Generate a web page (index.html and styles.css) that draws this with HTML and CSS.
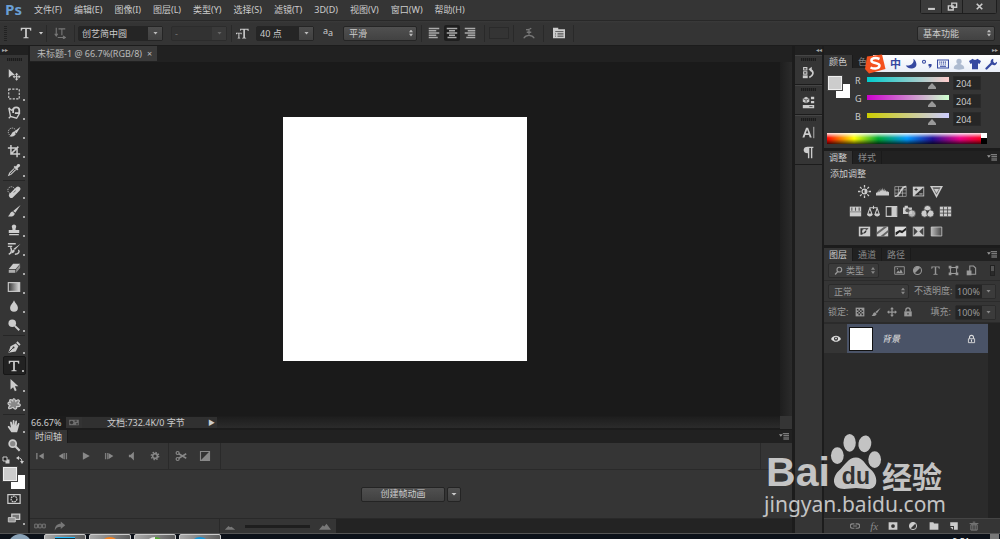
FILE: index.html
```
<!DOCTYPE html>
<html lang="zh-CN">
<head>
    <meta charset="UTF-8">
    <meta name="viewport" content="width=device-width, initial-scale=1.0">
    <title>未标题-1 @ 66.7%(RGB/8)</title>
    <link rel="stylesheet" href="styles.css">
</head>
<body>
    <!-- Icon sprite -->
    <svg class="sprite" aria-hidden="true">
        <defs>
            <linearGradient id="fade"><stop offset="0" stop-color="#333"/><stop offset="1" stop-color="#ddd"/></linearGradient>
            <linearGradient id="fade2"><stop offset="0" stop-color="#bbb"/><stop offset="1" stop-color="#444"/></linearGradient>
        </defs>
        <symbol id="move" viewBox="0 0 16 16"><path d="M2 1v10l3-2.500 4-.5z"/><path d="M11 5.500l2 2.200h-1.300v1.600h1.600V8l2.200 2-2.200 2v-1.300h-1.600v1.600H13l-2 2.200-2-2.200h1.300v-1.600H8.700V12l-2.200-2 2.200-2v1.300h1.600V7.700H9z"/></symbol>
        <symbol id="marquee" viewBox="0 0 16 16"><rect x="2" y="2.500" width="12" height="11" fill="none" stroke="currentColor" stroke-width="1.300" stroke-dasharray="2.500 1.500"/></symbol>
        <symbol id="lasso" viewBox="0 0 16 16"><path d="M2 2l3 3M2 2l2 10 7 2 3-5M4 12l-2 2M5 5l3-2" fill="none" stroke="currentColor" stroke-width="1.500"/><path d="M7 8V4.500a3.500 3 0 0 1 7 0V8H9" fill="none" stroke="currentColor" stroke-width="2"/></symbol>
        <symbol id="quicksel" viewBox="0 0 16 16"><circle cx="6" cy="8" r="4.500" fill="none" stroke="currentColor" stroke-dasharray="1.500 1"/><path d="M15.500 2L11 9.500 8.500 7.500zM9.500 8.500c.5 3-1.500 5-7 4.500 2.500-1 2.500-5 6-6z"/></symbol>
        <symbol id="crop" viewBox="0 0 16 16"><path d="M4.500 1v10.500H15M1 4.500h10.500V15M5 11l8-8" fill="none" stroke="currentColor" stroke-width="1.700"/></symbol>
        <symbol id="dropper" viewBox="0 0 16 16"><path d="M9 3l1.200 1L12 1.500c2-1.500 4 .8 2.500 2.500L12 6l1 1-1.500 1.500-4-4z"/><path d="M8.500 6L3 11.500 2 14l2.500-1L10 7.500" fill="none" stroke="currentColor" stroke-width="1.200"/></symbol>
        <symbol id="heal" viewBox="0 0 16 16"><circle cx="5" cy="6" r="4" fill="none" stroke="currentColor" stroke-dasharray="1.500 1"/><path d="M5 12L12.500 4.500" stroke="currentColor" stroke-width="5.500" stroke-linecap="round"/><path d="M7.500 8.500l2.500-2" stroke="#666"/></symbol>
        <symbol id="brush" viewBox="0 0 16 16"><path d="M15.500 1L9.500 10 7 8zM6.500 8.500l2.500 2.500c-1 3-4 4-8 3 2.500-1 2-5 5.500-5.500z"/></symbol>
        <symbol id="stamp" viewBox="0 0 16 16"><path d="M5.500 3.500a2.600 2.600 0 0 1 5 0c.2 2-1 2.500-.7 4.500H14v3.500H2V8h4.200c.3-2-.9-2.500-.7-4.500zM2.500 12.500h11V14h-11z"/></symbol>
        <symbol id="history" viewBox="0 0 16 16"><path d="M1 2h9M1 5h5M2 14c3-1 4-5 2-8M13 9c2 2 0 5-4 5" fill="none" stroke="currentColor" stroke-width="1.600"/><path d="M15.500 2L9 9 7.500 7.600zM7.500 8.500L9 10c-1 3-3 3-5 3 2-1 1-4 3.500-4.500z"/></symbol>
        <symbol id="eraser" viewBox="0 0 16 16"><path d="M7 3h8l-5 6H2z"/><path d="M2 10h7.500v3.500H2z" opacity=".8"/><path d="M10.500 9.500L15 4v4l-4.500 5.500z" opacity=".6"/></symbol>
        <symbol id="gradient" viewBox="0 0 16 16"><rect x="1.500" y="3" width="13" height="10" fill="url(#fade)" stroke="currentColor" stroke-width="1.300"/></symbol>
        <symbol id="blur" viewBox="0 0 16 16"><path d="M8 1.500c1 3 4.500 5.500 4.500 8.500a4.500 4.500 0 0 1-9 0C3.500 7 7 4.500 8 1.500z"/></symbol>
        <symbol id="dodge" viewBox="0 0 16 16"><circle cx="6" cy="6" r="4.300"/><path d="M9 9l5 5" stroke="currentColor" stroke-width="2.200"/></symbol>
        <symbol id="pen" viewBox="0 0 16 16"><path d="M1.500 14.500L4 7l6-3 3 3-3 6z"/><path d="M10.500 3L12 1.500 15.500 5 14 6.500z"/><path d="M2 14l5-5" stroke="#333"/><circle cx="7.500" cy="8.500" r="1.100" fill="#333"/></symbol>
        <symbol id="type" viewBox="0 0 16 16"><path d="M2 2h12v3.500h-1L12 3.300H9v9.400l2 .5V14H5v-.8l2-.5V3.300H4L3 5.500H2z"/></symbol>
        <symbol id="arrow" viewBox="0 0 16 16"><path d="M4 1v12l3-2.500L9 15l2-1-2-4.500h4z"/></symbol>
        <symbol id="shape" viewBox="0 0 16 16"><path d="M7.500 2c2-.5 2 2 2.500 3 1-1.500 3-2.500 4-1s-1.500 2.500-1.500 3.500c2 0 3 1 2.500 2.500s-3 1-4 1c.5 2-1 3.500-2.500 2.500S7.500 11.500 6.500 12 3 14.500 2 13s1-2.500 1.500-3.500C2 9 .5 8 1.500 6.500s2 0 2.500 0C3 5 2.500 3 4 3s2 1 2.500 1.500C6.500 3.500 6.500 2.500 7.500 2z" fill="#888" stroke="currentColor" stroke-width="1.300"/></symbol>
        <symbol id="hand" viewBox="0 0 16 16"><path d="M5 15L1 9.500C.5 8 2 7.500 3 8.500L4.500 10 3.500 4c0-1.300 1.600-1.500 2-.3L6.500 7V2c0-1.300 1.800-1.300 2 0v5l1-4.500c.3-1.200 2-1 1.900.3L11 8l1.500-3c.6-1 2-.5 1.700.7L12.500 12 11.500 15z"/></symbol>
        <symbol id="zoom" viewBox="0 0 16 16"><circle cx="6.500" cy="6.500" r="4" fill="#888" stroke="currentColor" stroke-width="2"/><path d="M9.500 9.500l5 5" stroke="currentColor" stroke-width="2.600"/></symbol>
        <symbol id="reset" viewBox="0 0 16 16"><path d="M7 7h8v8H7z"/><path d="M2 2h8v8H2z" fill="#222" stroke="currentColor" stroke-width="2"/></symbol>
        <symbol id="swap" viewBox="0 0 16 16"><path d="M4 4c5-1 8 2 8 8" fill="none" stroke="currentColor" stroke-width="2"/><path d="M6 0v8L0 4zM8 10h8l-4 6z"/></symbol>
        <symbol id="mask" viewBox="0 0 16 16"><path d="M1 3h14v10H1z" fill="#2a2a2a" stroke="currentColor" stroke-width="1.400"/><circle cx="8" cy="8" r="3.300" fill="none" stroke="currentColor" stroke-width="1.500" stroke-dasharray="2 .8"/></symbol>
        <symbol id="screens" viewBox="0 0 16 16"><path d="M5.500 3.500h9v6h-9z" fill="#777" stroke="currentColor" stroke-width="1.500"/><path d="M1.500 7.500h8v5h-8z" fill="#999" stroke="currentColor"/></symbol>
        <symbol id="orient" viewBox="0 0 16 16"><path d="M3 1v10M1 9l2 3 2-3M5 14h9M12 12l3 2-3 2M6 2.500h9M10.500 2.500V11" fill="none" stroke="currentColor" stroke-width="1.500"/></symbol>
        <symbol id="size" viewBox="0 0 16 16"><path d="M5 2h10.500v3h-1L14 3.500h-3V13l1.500.5V14h-5v-.5L9 13V3.500H6L5.500 5H5zM0 7h7v2H6l-.3-.9H4.200V13l1 .4V14H2v-.6l.9-.4V8.100H1.300L1 9H0z"/></symbol>
        <symbol id="left" viewBox="0 0 16 16"><path d="M1 2h14M1 5h10M1 8h14M1 11h10M1 14h12" stroke="currentColor" stroke-width="1.800"/></symbol>
        <symbol id="center" viewBox="0 0 16 16"><path d="M1 2h14M4 5h8M1 8h14M4 11h8M2 14h12" stroke="currentColor" stroke-width="1.800"/></symbol>
        <symbol id="right" viewBox="0 0 16 16"><path d="M1 2h14M5 5h10M1 8h14M5 11h10M3 14h12" stroke="currentColor" stroke-width="1.800"/></symbol>
        <symbol id="warp" viewBox="0 0 16 16"><path d="M4 3.500c3 .5 5 0 7-2M8 3v7M5 7h6M1 15c3-5 11-5 14 0" fill="none" stroke="currentColor" stroke-width="1.700"/></symbol>
        <symbol id="panel" viewBox="0 0 16 16"><path d="M0 1h7v2h9v12H0z"/><path d="M3 6h11M3 8.500h1M3 10.500h1M3 12.500h1M6 8.500h8M6 10.500h8M6 12.500h8" stroke="#444"/></symbol>
        <symbol id="hist" viewBox="0 0 16 16"><path d="M2 2h4v3H2zM2 7h4v3H2z" fill="none" stroke="currentColor" stroke-width="1.300"/><path d="M1 11.500h6V15H1z"/><path d="M9 14c5-2 6-7 2-9" fill="none" stroke="currentColor" stroke-width="2"/><path d="M12 1v7L8 4z"/></symbol>
        <symbol id="props" viewBox="0 0 16 16"><path d="M5 1l4 2v4L5 9 1 7V3z"/><path d="M11 1h4v3h-4zM11 6h4v3h-4zM1 11h14v4H1z"/><path d="M5 9V5L1 3M5 5l4-2M9 13h4" fill="none" stroke="#444"/></symbol>
        <symbol id="char" viewBox="0 0 16 16"><path d="M5 2h2.500L12 14H9.500l-1-3H4l-1 3H.5zm-.3 7h3.200L6.300 4.500z" fill-rule="evenodd"/><path d="M14.500 1v14" stroke="currentColor"/></symbol>
        <symbol id="para" viewBox="0 0 16 16"><path d="M14 1v1.500h-1.300V15h-1.700V2.500H9V15H7.300V9C4 9 2 7.500 2 5s2-4 5-4z"/></symbol>
        <!-- adjustments -->
        <symbol id="sun" viewBox="0 0 16 16"><circle cx="8" cy="8" r="3" fill="none" stroke="currentColor" stroke-width="1.500"/><path d="M8 5v6a3 3 0 0 0 0-6M7.200 0h1.600v3H7.200zM7.200 13h1.600v3H7.200zM0 7.200h3v1.600H0zM13 7.200h3v1.600h-3z"/><path d="M2.500 2.500l2 2M11.500 11.500l2 2M13.500 2.500l-2 2M4.500 11.500l-2 2" stroke="currentColor" stroke-width="1.500"/></symbol>
        <symbol id="levels" viewBox="0 0 16 16"><path d="M0 13V9l1.500 1V8L3 9V6l1.500 3V5L6 8V4l1.500 4V3L9 8V5l1.500 3V4L12 8V6l1.500 3V7L15 9l1-1v5z"/></symbol>
        <symbol id="curves" viewBox="0 0 16 16"><path d="M1 2h14v12H1zM5.500 2v12M10.500 2v12M1 6h14M1 10h14" fill="none" stroke="currentColor" opacity=".7"/><path d="M1 14c8 0 6-12 14-12" fill="none" stroke="currentColor" stroke-width="2"/></symbol>
        <symbol id="exposure" viewBox="0 0 16 16"><path d="M1 2h14v12H1z"/><path d="M14 3v10H3z" fill="#333"/><path d="M3 5.500h4M5 3.500v4" stroke="#333" stroke-width="1.200"/><path d="M9 11h4" stroke="currentColor" stroke-width="1.200"/></symbol>
        <symbol id="vib" viewBox="0 0 16 16"><path d="M1.500 2h13L8 14z" fill="#666" stroke="currentColor" stroke-width="1.800"/><path d="M5 5h6l-3 5z"/></symbol>
        <symbol id="hue" viewBox="0 0 16 16"><path d="M1 2h14v12H1z"/><path d="M3.500 3v4M8 3v4M12.500 3v4" stroke="#555" stroke-width="1.300"/><path d="M1 8h14v1H1z" fill="#777"/></symbol>
        <symbol id="balance" viewBox="0 0 16 16"><path d="M3 3.500h10M8 1v4M3.500 4L1 11h5zM12.500 4L10 11h5z" fill="none" stroke="currentColor" stroke-width="1.300"/><path d="M0 11h7c0 4-7 4-7 0zM9 11h7c0 4-7 4-7 0z"/></symbol>
        <symbol id="bw" viewBox="0 0 16 16"><path d="M1.500 2h13v12h-13z" fill="#333" stroke="currentColor" stroke-width="1.300"/><path d="M8 2h6v12H8z"/></symbol>
        <symbol id="photo" viewBox="0 0 16 16"><path d="M0 3h2V1h4v2h5v8H0z"/><circle cx="5.500" cy="6.500" r="2.500" fill="#555"/><circle cx="11" cy="10.500" r="4.500" stroke="#555" opacity=".85"/></symbol>
        <symbol id="mixer" viewBox="0 0 16 16"><g stroke="#444"><circle cx="8" cy="5" r="4.500"/><circle cx="4.500" cy="10.500" r="4.500"/><circle cx="11.500" cy="10.500" r="4.500"/></g><path d="M6 7h4l-2 4z" fill="#333"/></symbol>
        <symbol id="lookup" viewBox="0 0 16 16"><path d="M1 2h14v12H1z"/><path d="M5.500 2v12M10.500 2v12M1 6h14M1 10h14" stroke="#444"/></symbol>
        <symbol id="invert" viewBox="0 0 16 16"><path d="M1 2h14v12H1z"/><path d="M3 4h10L5 12H3z" fill="#333"/><circle cx="8" cy="8" r="3" /><path d="M10 6L6 10a3 3 0 0 0 4-4" fill="#333"/></symbol>
        <symbol id="poster" viewBox="0 0 16 16"><path d="M1 2h14v12H1z"/><path d="M1 9l9-7h4L1 12zM5 14L15 6v3l-6 5z" fill="#666"/></symbol>
        <symbol id="thresh" viewBox="0 0 16 16"><path d="M1 2h14v12H1z" fill="#ddd"/><path d="M2 9l5-3 3 1 5-4v3l-5 4-3-1-5 4z" fill="#222"/></symbol>
        <symbol id="selective" viewBox="0 0 16 16"><path d="M1 2h14v12H1z"/><path d="M2 3l5 5-5 5zM14 3L9 8l5 5z" fill="#444"/></symbol>
        <symbol id="map" viewBox="0 0 16 16"><path d="M1.500 2.500h13v11h-13z" fill="url(#fade2)" stroke="currentColor"/></symbol>
        <!-- layers -->
        <symbol id="search" viewBox="0 0 16 16"><circle cx="9.500" cy="6.500" r="4.200" fill="none" stroke="currentColor" stroke-width="2"/><path d="M6.500 10L2 15" stroke="currentColor" stroke-width="2.500"/></symbol>
        <symbol id="image" viewBox="0 0 16 16"><path d="M1 2.500h14v11H1z" fill="none" stroke="currentColor" stroke-width="1.300"/><path d="M3 12l3-4 2 2 2-4 3 6z"/><circle cx="5" cy="5.500" r="1"/></symbol>
        <symbol id="adjust" viewBox="0 0 16 16"><circle cx="8" cy="8" r="5.800" fill="none" stroke="currentColor" stroke-width="1.500"/><path d="M12 4L4 12A5.700 5.700 0 0 1 4 4a5.700 5.700 0 0 1 8 0z"/></symbol>
        <symbol id="bounds" viewBox="0 0 16 16"><path d="M3.500 3.500h9v9h-9z" fill="none" stroke="currentColor" stroke-width="1.500"/><path d="M1 1h4v4H1zM11 1h4v4h-4zM1 11h4v4H1zM11 11h4v4h-4z"/></symbol>
        <symbol id="smart" viewBox="0 0 16 16"><path d="M5.500 1.500H11l3 3v9H5.500z" fill="none" stroke="currentColor" stroke-width="1.600"/><path d="M1 8h7v7H1z"/></symbol>
        <symbol id="checker" viewBox="0 0 16 16"><path d="M1 1h14v14H1z"/><path d="M3 3h2.500v2.500H3zM8 3h2.500v2.500H8zM5.500 5.500H8V8H5.500zM10.500 5.500H13V8h-2.500zM3 8h2.500v2.500H3zM8 8h2.500v2.500H8zM5.500 10.500H8V13H5.500zM10.500 10.500H13V13h-2.500z" fill="#333"/></symbol>
        <symbol id="cross" viewBox="0 0 16 16"><path d="M8 0l3 3.500H9V7h3.500V5L16 8l-3.500 3V9H9v3.500h2L8 16l-3-3.500h2V9H3.500v2L0 8l3.500-3v2H7V3.500H5z"/></symbol>
        <symbol id="lock" viewBox="0 0 16 16"><path d="M2 7h12v8H2z"/><path d="M4.500 7V5a3.500 3.500 0 0 1 7 0v2" fill="none" stroke="currentColor" stroke-width="2"/><path d="M7.200 9.500h1.600v3H7.200z" fill="#333"/></symbol>
        <symbol id="lock-open" viewBox="0 0 16 16"><path d="M2.500 7.500h11v7h-11z" fill="none" stroke="currentColor" stroke-width="1.600"/><path d="M4.500 7V5a3.500 3.500 0 0 1 7 0v2" fill="none" stroke="currentColor" stroke-width="2"/><path d="M7 9h2v4H7z"/></symbol>
        <symbol id="eye" viewBox="0 0 16 16"><path d="M0 8c4-7 12-7 16 0-4 6-12 6-16 0z"/><circle cx="8" cy="7.500" r="3.300" fill="#333"/><circle cx="8" cy="7" r="1.400"/></symbol>
        <symbol id="link" viewBox="0 0 16 16"><path d="M7 4.500H4a3.500 3.500 0 0 0 0 7h3M9 4.500h3a3.500 3.500 0 0 1 0 7H9M5 8h6" fill="none" stroke="currentColor" stroke-width="1.800"/></symbol>
        <symbol id="addmask" viewBox="0 0 16 16"><path d="M1 2h14v12H1z"/><circle cx="8" cy="8" r="3" fill="#333"/></symbol>
        <symbol id="folder" viewBox="0 0 16 16"><path d="M1 2h6l1 2h7v10H1z"/></symbol>
        <symbol id="new" viewBox="0 0 16 16"><path d="M2 2h12v12H8V8H2z"/><path d="M2 9.500h4.500V14z"/></symbol>
        <symbol id="trash" viewBox="0 0 16 16"><path d="M1 3h14v1.500H1zM6 1h4v1.500H6z"/><path d="M3 6h10v8.500H3zM6.200 6v8M9.800 6v8" fill="none" stroke="currentColor" stroke-width="1.400"/></symbol>
        <symbol id="menu" viewBox="0 0 16 16"><path d="M0 5h6L3 9zM6 3h10v1.500H6zM7 6h9v1.500H7zM7 9h9v1.500H7zM7 12h9v1.500H7z"/></symbol>
        <!-- timeline -->
        <symbol id="first" viewBox="0 0 16 16"><path d="M2 3h2v10H2zM14 3v10L6 8z"/></symbol>
        <symbol id="prev" viewBox="0 0 16 16"><path d="M9 3v10L1 8zM10 3h1.500v10H10zM13 3h1.500v10H13z"/></symbol>
        <symbol id="play" viewBox="0 0 16 16"><path d="M3 2l11 6-11 6z"/></symbol>
        <symbol id="next" viewBox="0 0 16 16"><path d="M7 3v10l8-5zM4.500 3H6v10H4.500zM1.500 3H3v10H1.500z"/></symbol>
        <symbol id="sound" viewBox="0 0 16 16"><path d="M3 6h3l5-5v14l-5-5H3z"/></symbol>
        <symbol id="gear" viewBox="0 0 16 16"><circle cx="8" cy="8" r="3.800" fill="none" stroke="currentColor" stroke-width="2.600"/><circle cx="8" cy="8" r="6" fill="none" stroke="currentColor" stroke-width="2" stroke-dasharray="2.350 2.350"/></symbol>
        <symbol id="scissors" viewBox="0 0 16 16"><circle cx="3.500" cy="4" r="2" fill="none" stroke="currentColor" stroke-width="1.600"/><circle cx="3.500" cy="12" r="2" fill="none" stroke="currentColor" stroke-width="1.600"/><path d="M5 5l10 6M5 11l10-6" stroke="currentColor" stroke-width="2"/></symbol>
        <symbol id="trans" viewBox="0 0 16 16"><path d="M2 2h12v12H2z" fill="#333" stroke="currentColor" stroke-width="1.500"/><path d="M14 2v12H2z" /></symbol>
        <symbol id="frames" viewBox="0 0 16 16"><path d="M1 5.500h3.500v5H1zM6.200 5.500h3.500v5H6.200zM11.500 5.500H15v5h-3.500z" fill="none" stroke="currentColor" stroke-width="1.300"/></symbol>
        <symbol id="share" viewBox="0 0 16 16"><path d="M9 2l6 5-6 5V9C5 9 3 10 1 14c0-6 3-9 8-9z"/></symbol>
        <symbol id="hill" viewBox="0 0 16 16"><path d="M1 13l5-5 2 1.500L10 9l5 4z"/></symbol>
        <symbol id="hills" viewBox="0 0 16 16"><path d="M0 13l5-6 2 1.500L10 5l6 8z"/></symbol>
        <symbol id="film" viewBox="0 0 16 16"><path d="M1 4h14v8H1z" opacity=".5"/><circle cx="4.500" cy="8" r="2.500" fill="#333"/><path d="M9 5h3v2H9zM11 9h3v2h-3z" fill="#333"/></symbol>
        <!-- input method bar -->
        <symbol id="moon" viewBox="0 0 16 16"><path d="M11 1c2 5-3 10-10 9 4 7 16 4 14-3-.5-3-2-5-4-6z"/></symbol>
        <symbol id="punct" viewBox="0 0 16 16"><circle cx="4" cy="5" r="2" fill="none" stroke="currentColor" stroke-width="1.500"/><path d="M10 8h4c1 3-1 5-4 6 1-1 2-2 1-3h-1z"/></symbol>
        <symbol id="keyboard" viewBox="0 0 16 16"><path d="M.7 2.700h14.600v10.600H.7z" fill="none" stroke="currentColor" stroke-width="1.400"/><path d="M3 5.500h10M3 8h10" stroke="currentColor" stroke-width="1.500" stroke-dasharray="1.500 1"/><path d="M4 11h8" stroke="currentColor" stroke-width="1.500"/></symbol>
        <symbol id="user" viewBox="0 0 16 16"><circle cx="8" cy="4.500" r="3.500"/><path d="M1 14c0-8 14-8 14 0-3 2-11 2-14 0z"/></symbol>
        <symbol id="shirt" viewBox="0 0 16 16"><path d="M5 1c1 2 5 2 6 0l5 3-2 4-2-1v8H4V7L2 8 0 4z"/></symbol>
        <symbol id="wrench" viewBox="0 0 16 16"><path d="M2 14l7-7" stroke="currentColor" stroke-width="3" stroke-linecap="round"/><path d="M11 1a4 4 0 0 0-3 6l2 2a4 4 0 0 0 6-4l-3 2-2-2z"/></symbol>
    </svg>

    <header class="menubar">
        <span class="logo">Ps</span>
        <nav class="menus">
            <a href="#">文件(F)</a>
            <a href="#">编辑(E)</a>
            <a href="#">图像(I)</a>
            <a href="#">图层(L)</a>
            <a href="#">类型(Y)</a>
            <a href="#">选择(S)</a>
            <a href="#">滤镜(T)</a>
            <a href="#">3D(D)</a>
            <a href="#">视图(V)</a>
            <a href="#">窗口(W)</a>
            <a href="#">帮助(H)</a>
        </nav>
        <div class="window-buttons">
            <button aria-label="最小化"><svg viewBox="0 0 16 16"><path d="M3 10h10v3H3z"/></svg></button>
            <button aria-label="还原"><svg viewBox="0 0 16 16"><path d="M7 3h7v6H7zM2 7h7v6H2z" fill="#3b3b3b" stroke="currentColor" stroke-width="2"/></svg></button>
            <button class="close" aria-label="关闭"><svg viewBox="0 0 16 16"><path d="M4 4l8 8M12 4l-8 8" stroke="currentColor" stroke-width="2.400"/></svg></button>
        </div>
    </header>

    <div class="options">
        <span class="grip-v"></span>
        <button class="preset" aria-label="文字工具"><svg class="icon"><use href="#type"/></svg><i class="caret"></i></button>
        <i class="rule"></i>
        <button class="flat dim orient" aria-label="切换文本取向"><svg class="icon"><use href="#orient"/></svg></button>
        <i class="rule"></i>
        <span class="combo font-name"><select aria-label="字体"><option>创艺简中圆</option></select></span>
        <span class="combo font-style off"><select aria-label="字体样式" disabled><option>-</option></select></span>
        <i class="rule"></i>
        <svg class="icon size-icon"><use href="#size"/></svg>
        <span class="combo font-size"><select aria-label="字号"><option>40 点</option></select></span>
        <span class="aa"><sup>a</sup>a</span>
        <span class="drop smooth"><select aria-label="消除锯齿"><option>平滑</option></select></span>
        <i class="rule"></i>
        <div class="aligns">
            <button aria-label="左对齐"><svg class="icon"><use href="#left"/></svg></button>
            <button class="on" aria-label="居中"><svg class="icon"><use href="#center"/></svg></button>
            <button aria-label="右对齐"><svg class="icon"><use href="#right"/></svg></button>
        </div>
        <i class="rule"></i>
        <button class="text-color" aria-label="文本颜色"></button>
        <i class="rule"></i>
        <button class="flat dim warp" aria-label="变形"><svg class="icon"><use href="#warp"/></svg></button>
        <i class="rule"></i>
        <button class="flat warp" aria-label="面板"><svg class="icon"><use href="#panel"/></svg></button>
        <i class="rule"></i>
        <span class="drop workspace"><select aria-label="工作区"><option>基本功能</option></select></span>
    </div>

    <main class="desk">
        <aside class="toolbar">
            <div class="collapse">▸▸</div>
            <div class="grip"></div>
            <div class="tools">
                <button class="solo" aria-label="移动"><svg class="icon"><use href="#move"/></svg></button>
                <button aria-label="选框"><svg class="icon"><use href="#marquee"/></svg></button>
                <button aria-label="套索"><svg class="icon"><use href="#lasso"/></svg></button>
                <button aria-label="快速选择"><svg class="icon"><use href="#quicksel"/></svg></button>
                <button aria-label="裁剪"><svg class="icon"><use href="#crop"/></svg></button>
                <button aria-label="吸管"><svg class="icon"><use href="#dropper"/></svg></button>
                <hr>
                <button aria-label="修复画笔"><svg class="icon"><use href="#heal"/></svg></button>
                <button aria-label="画笔"><svg class="icon"><use href="#brush"/></svg></button>
                <button aria-label="图章"><svg class="icon"><use href="#stamp"/></svg></button>
                <button aria-label="历史画笔"><svg class="icon"><use href="#history"/></svg></button>
                <button aria-label="橡皮擦"><svg class="icon"><use href="#eraser"/></svg></button>
                <button aria-label="渐变"><svg class="icon"><use href="#gradient"/></svg></button>
                <button aria-label="模糊"><svg class="icon"><use href="#blur"/></svg></button>
                <button aria-label="减淡"><svg class="icon"><use href="#dodge"/></svg></button>
                <hr>
                <button aria-label="钢笔"><svg class="icon"><use href="#pen"/></svg></button>
                <button class="on" aria-label="文字"><svg class="icon"><use href="#type"/></svg></button>
                <button aria-label="路径选择"><svg class="icon"><use href="#arrow"/></svg></button>
                <button aria-label="形状"><svg class="icon"><use href="#shape"/></svg></button>
                <hr>
                <button aria-label="抓手"><svg class="icon"><use href="#hand"/></svg></button>
                <button class="solo" aria-label="缩放"><svg class="icon"><use href="#zoom"/></svg></button>
            </div>
            <div class="swap-row">
                <svg class="icon"><use href="#reset"/></svg>
                <svg class="icon"><use href="#swap"/></svg>
            </div>
            <div class="swatches"><i class="back"></i><i class="front"></i></div>
            <div class="tools">
                <button class="solo" aria-label="快速蒙版"><svg class="icon"><use href="#mask"/></svg></button>
                <button aria-label="屏幕模式"><svg class="icon"><use href="#screens"/></svg></button>
            </div>
        </aside>

        <section class="center">
            <div class="doc-tabs">
                <div class="doc-tab">未标题-1 @ 66.7%(RGB/8) <button aria-label="关闭文档">×</button></div>
            </div>
            <div class="stage">
                <div class="viewport"><div class="artboard"></div></div>
                <div class="scroll-y"></div>
            </div>
            <div class="status">
                <span class="zoom-value">66.67%</span>
                <svg class="icon"><use href="#film"/></svg>
                <span class="doc-info">文档:732.4K/0 字节</span>
                <button aria-label="状态选项">▶</button>
                <div class="scroll-x"></div>
                <div class="corner"></div>
            </div>

            <div class="timeline">
                <div class="tabs">
                    <button class="tab active">时间轴</button>
                    <svg class="icon panel-menu"><use href="#menu"/></svg>
                </div>
                <div class="controls">
                    <div class="transport">
                        <button aria-label="第一帧"><svg class="icon"><use href="#first"/></svg></button>
                        <button aria-label="上一帧"><svg class="icon"><use href="#prev"/></svg></button>
                        <button aria-label="播放"><svg class="icon"><use href="#play"/></svg></button>
                        <button aria-label="下一帧"><svg class="icon"><use href="#next"/></svg></button>
                        <button aria-label="音频"><svg class="icon"><use href="#sound"/></svg></button>
                        <button aria-label="设置"><svg class="icon"><use href="#gear"/></svg></button>
                    </div>
                    <div class="edit">
                        <button aria-label="拆分"><svg class="icon"><use href="#scissors"/></svg></button>
                        <button aria-label="过渡"><svg class="icon"><use href="#trans"/></svg></button>
                    </div>
                    <div class="track-end"></div>
                </div>
                <div class="create">
                    <button class="create-main">创建帧动画</button>
                    <button class="create-more" aria-label="更多"><i class="caret"></i></button>
                </div>
                <div class="timeline-foot">
                    <div class="foot-left">
                        <svg class="icon"><use href="#frames"/></svg>
                        <svg class="icon"><use href="#share"/></svg>
                    </div>
                    <div class="foot-zoom">
                        <svg class="icon"><use href="#hill"/></svg>
                        <input type="range" aria-label="时间轴缩放">
                        <svg class="icon"><use href="#hills"/></svg>
                    </div>
                </div>
            </div>
        </section>

        <aside class="dock">
            <div class="collapse">◂◂</div>
            <div class="dock-group"><div class="grip"></div><button aria-label="历史记录"><svg class="icon"><use href="#hist"/></svg></button></div>
            <div class="dock-group"><div class="grip"></div><button aria-label="属性"><svg class="icon"><use href="#props"/></svg></button></div>
            <div class="dock-group"><div class="grip"></div><button aria-label="字符"><svg class="icon"><use href="#char"/></svg></button><button aria-label="段落"><svg class="icon"><use href="#para"/></svg></button></div>
        </aside>

        <aside class="panels">
            <div class="collapse">▸▸</div>
            <section class="panel color-panel">
                <div class="tabs">
                    <button class="tab active">颜色</button>
                    <button class="tab">色板</button>
                </div>
                <div class="color-body">
                    <div class="swatches"><i class="back"></i><i class="front"></i></div>
                    <div class="channels">
                        <div class="channel"><label for="r">R</label><input class="red" type="range" max="255" value="204" aria-label="R"><input class="num" id="r" type="text" value="204"></div>
                        <div class="channel"><label for="g">G</label><input class="green" type="range" max="255" value="204" aria-label="G"><input class="num" id="g" type="text" value="204"></div>
                        <div class="channel"><label for="b">B</label><input class="blue" type="range" max="255" value="204" aria-label="B"><input class="num" id="b" type="text" value="204"></div>
                    </div>
                </div>
                <div class="spectrum"><i></i></div>
            </section>

            <section class="panel adjust-panel">
                <div class="tabs">
                    <button class="tab active">调整</button>
                    <button class="tab">样式</button>
                    <svg class="icon panel-menu"><use href="#menu"/></svg>
                </div>
                <p>添加调整</p>
                <div class="adjust-row">
                    <svg class="icon"><use href="#sun"/></svg>
                    <svg class="icon"><use href="#levels"/></svg>
                    <svg class="icon"><use href="#curves"/></svg>
                    <svg class="icon"><use href="#exposure"/></svg>
                    <svg class="icon"><use href="#vib"/></svg>
                </div>
                <div class="adjust-row">
                    <svg class="icon"><use href="#hue"/></svg>
                    <svg class="icon"><use href="#balance"/></svg>
                    <svg class="icon"><use href="#bw"/></svg>
                    <svg class="icon"><use href="#photo"/></svg>
                    <svg class="icon"><use href="#mixer"/></svg>
                    <svg class="icon"><use href="#lookup"/></svg>
                </div>
                <div class="adjust-row">
                    <svg class="icon"><use href="#invert"/></svg>
                    <svg class="icon"><use href="#poster"/></svg>
                    <svg class="icon"><use href="#thresh"/></svg>
                    <svg class="icon"><use href="#selective"/></svg>
                    <svg class="icon"><use href="#map"/></svg>
                </div>
            </section>

            <section class="panel layers-panel">
                <div class="tabs">
                    <button class="tab active">图层</button>
                    <button class="tab">通道</button>
                    <button class="tab">路径</button>
                    <svg class="icon panel-menu"><use href="#menu"/></svg>
                </div>
                <div class="layer-row filter">
                    <span class="drop kind"><svg class="icon"><use href="#search"/></svg><select aria-label="滤镜类型"><option>类型</option></select></span>
                    <div class="filters">
                        <svg class="icon"><use href="#image"/></svg>
                        <svg class="icon"><use href="#adjust"/></svg>
                        <svg class="icon"><use href="#type"/></svg>
                        <svg class="icon"><use href="#bounds"/></svg>
                        <svg class="icon"><use href="#smart"/></svg>
                    </div>
                    <i class="toggle"></i>
                </div>
                <div class="layer-row">
                    <span class="drop blend"><select aria-label="混合模式"><option>正常</option></select></span>
                    <label for="opacity">不透明度:</label>
                    <span class="combo percent"><select id="opacity"><option>100%</option></select></span>
                </div>
                <div class="layer-row">
                    <span>锁定:</span>
                    <div class="locks">
                        <svg class="icon"><use href="#checker"/></svg>
                        <svg class="icon"><use href="#brush"/></svg>
                        <svg class="icon"><use href="#cross"/></svg>
                        <svg class="icon"><use href="#lock"/></svg>
                    </div>
                    <label class="fill-label" for="fill">填充:</label>
                    <span class="combo percent"><select id="fill"><option>100%</option></select></span>
                </div>
                <div class="layer-list">
                    <div class="layer">
                        <span class="visible"><svg class="icon"><use href="#eye"/></svg></span>
                        <div class="layer-main">
                            <i class="thumb"></i>
                            <em>背景</em>
                            <svg class="icon"><use href="#lock-open"/></svg>
                        </div>
                    </div>
                </div>
                <div class="layer-foot">
                    <svg class="icon dim"><use href="#link"/></svg>
                    <span class="fx">fx</span>
                    <svg class="icon"><use href="#addmask"/></svg>
                    <svg class="icon"><use href="#adjust"/></svg>
                    <svg class="icon"><use href="#folder"/></svg>
                    <svg class="icon"><use href="#new"/></svg>
                    <svg class="icon dim"><use href="#trash"/></svg>
                </div>
            </section>
        </aside>
    </main>

    <footer class="taskbar">
        <i class="orb"></i>
        <div class="tasks">
            <span class="task ps"><i></i></span>
            <span class="task orange"><i></i></span>
            <span class="task leaf"><i></i></span>
            <span class="task blue"><i></i></span>
        </div>
        <span class="clock">9:51</span>
        <i class="peek"></i>
    </footer>

    <!-- Input method bar -->
    <div class="ime">
        <svg class="sogou" viewBox="0 0 22 20"><path d="M3 2.500L18 .5 21.500 15 5 19.500 1 15z" fill="#f4511e"/><path d="M15.500 5C11 3 7 4.500 7.500 7s8 1.500 8 4.500-5 4-9 2" fill="none" stroke="#fff" stroke-width="2.500"/></svg>
        <b>中</b>
        <svg class="icon"><use href="#moon"/></svg>
        <svg class="icon"><use href="#punct"/></svg>
        <svg class="icon"><use href="#keyboard"/></svg>
        <svg class="icon pale"><use href="#user"/></svg>
        <svg class="icon"><use href="#shirt"/></svg>
        <svg class="icon"><use href="#wrench"/></svg>
    </div>

    <!-- Watermark -->
    <div class="watermark">
        <div class="brand">
            <span class="bai">Bai</span>
            <span class="paw">
                <svg viewBox="0 0 52 58"><ellipse cx="7" cy="22" rx="6.500" ry="8.500"/><ellipse cx="19.500" cy="9" rx="6.300" ry="9"/><ellipse cx="35" cy="10" rx="6.500" ry="8.500" transform="rotate(10 35 10)"/><ellipse cx="45" cy="26" rx="6.500" ry="8.500"/><path d="M26 24c7 0 9 7 15 12 8 7 8 20-3 20-5 0-8-1-12-1s-8 1-12 1C2 56 1 45 8 38c7-6 10-14 18-14z"/></svg>
                <span class="du">du</span>
            </span>
            <span class="jingyan">经验</span>
        </div>
        <div class="url">jingyan.baidu.com</div>
    </div>
</body>
</html>
```
FILE: styles.css
```
* {
    box-sizing: border-box;
}

body {
    margin: 0;
    height: 100vh;
    display: flex;
    flex-direction: column;
    position: relative;
    overflow: hidden;
    background: #1c1c1c;
    color: #ccc;
    font: 9px/12px "Noto Sans", "Noto Sans CJK SC", sans-serif;
}

button, select, input {
    margin: 0;
    padding: 0;
    border: 0;
    border-radius: 0;
    background: none;
    color: inherit;
    font: inherit;
    appearance: none;
}

button {
    display: flex;
    align-items: center;
    justify-content: center;
}

a {
    color: inherit;
    text-decoration: none;
}

.sprite {
    position: absolute;
    width: 0;
    height: 0;
}

.icon {
    display: block;
    flex: none;
    width: 12px;
    height: 12px;
    fill: currentColor;
}

.dim {
    color: #777;
}

.caret {
    width: 6px;
    height: 3px;
    background: currentColor;
    clip-path: polygon(0 0, 100% 0, 50% 100%);
}

/* Menu bar */
.menubar {
    display: flex;
    height: 20px;
    padding-left: 5px;
    background: #353535;
}

.logo {
    width: 29px;
    color: #6a9fd4;
    font: bold 15px/19px "Open Sans", sans-serif;
}

.menus {
    display: flex;
    gap: 12px;
    line-height: 20px;
    white-space: nowrap;
}

.window-buttons {
    display: flex;
    height: 14px;
    margin: 0 3px 0 auto;
    border: 1px solid #1e1e1e;
    border-top: 0;
    border-radius: 0 0 3px 3px;
}

.window-buttons button {
    width: 21px;
    border-right: 1px solid #1e1e1e;
    background: #3b3b3b;
}

.window-buttons .close {
    width: 33px;
    border: 0;
}

.window-buttons svg {
    width: 11px;
    height: 11px;
    fill: currentColor;
}

/* Options bar */
.options {
    display: flex;
    align-items: center;
    height: 25px;
    padding: 0 5px 0 4px;
    border-top: 1px solid #282828;
    background: linear-gradient(#3a3a3a, #343434 2px);
}

.grip-v {
    width: 3px;
    height: 15px;
    margin-right: 9px;
    background: repeating-linear-gradient(#222 0 1px, #353535 1px 2px);
}

.rule {
    width: 1px;
    height: 17px;
    background: #292929;
}

.preset {
    gap: 6px;
    width: 30px;
}

.preset .icon {
    width: 14px;
    height: 14px;
}

.preset .caret {
    width: 5px;
}

.preset + .rule {
    margin-right: 7px;
}

.orient {
    margin-right: 8px;
}

.font-name {
    width: 85px;
    margin: 0 8px 0 3px;
}

.font-style {
    width: 56px;
    margin-right: 4px;
}

.size-icon {
    width: 13px;
    height: 13px;
    margin: 0 7px 0 4px;
}

.font-size {
    width: 58px;
}

.aa {
    width: 29px;
    padding-left: 9px;
    white-space: nowrap;
}

.aa sup {
    font-size: 9px;
    line-height: 0;
    vertical-align: 2px;
}

.smooth {
    width: 74px;
    margin-right: 4px;
}

.combo, .drop {
    position: relative;
    display: block;
    height: 15px;
    border: 1px solid #252525;
    border-radius: 2px;
    background: linear-gradient(#505050, #424242);
}

.combo {
    background: #252525;
}

.combo select, .drop select {
    display: block;
    width: 100%;
    height: 13px;
    padding-left: 5px;
    line-height: 13px;
    opacity: 1;
}

.combo select {
    padding-left: 3px;
}

.combo::before {
    content: "";
    position: absolute;
    right: 0;
    width: 14px;
    height: 13px;
    background: linear-gradient(#4c4c4c, #404040);
}

.combo::after, .drop::after {
    content: "";
    position: absolute;
    top: 5px;
    right: 4px;
    width: 5px;
    height: 3px;
    background: #bbb;
    clip-path: polygon(0 0, 100% 0, 50% 100%);
    pointer-events: none;
}

.drop::after {
    top: 3px;
    right: 3px;
    width: 4px;
    height: 7px;
    clip-path: polygon(0 40%, 50% 0, 100% 40%, 0 40%, 0 60%, 100% 60%, 50% 100%, 0 60%);
}

.off {
    color: #777;
    background: #323232;
    border-color: #2c2c2c;
}

.off::before {
    background: #3a3a3a;
}

.off::after {
    background: #666;
}

.aligns {
    display: flex;
    gap: 2px;
    margin: 0 6px 0 4px;
    color: #aaa;
}

.aligns button {
    width: 16px;
    height: 16px;
    border-radius: 2px;
}

.aligns .on {
    background: #1e1e1e;
}

.text-color {
    width: 20px;
    height: 12px;
    margin: 0 4px;
    border: 1px solid #2a2a2a;
}

.warp {
    width: 29px;
}

.workspace {
    width: 78px;
    margin-left: auto;
}

/* Work area */
.desk {
    flex: 1;
    min-height: 0;
    display: flex;
    gap: 2px;
    padding-top: 1px;
}

.collapse {
    height: 9px;
    padding-left: 2px;
    color: #aaa;
    font: 6px/8px "DejaVu Sans", sans-serif;
}

.grip {
    width: 15px;
    height: 3px;
    margin: 3px auto;
    background: repeating-linear-gradient(90deg, #1c1c1c 0 1px, #2c2c2c 1px 2px);
}

.toolbar {
    width: 28px;
    background: #353535;
}

.toolbar .collapse, .dock .collapse, .panels .collapse {
    background: #212121;
}

.toolbar .grip {
    margin: 3px 7px 4px;
}

.tools button {
    position: relative;
    width: 23px;
    height: 19px;
    margin: 0 2px 0 3px;
    padding-right: 1px;
}

.tools .icon {
    width: 14px;
    height: 14px;
}

.tools button::after {
    content: "";
    position: absolute;
    right: 1px;
    bottom: 2px;
    width: 2px;
    height: 2px;
    background: #aaa;
}

.tools .solo::after {
    display: none;
}

.tools .on {
    border: 1px solid #171717;
    border-radius: 2px;
    background: #222;
}

.tools hr {
    height: 1px;
    margin: 1px 3px;
    border: 0;
    background: #262626;
}

.toolbar .swap-row {
    display: flex;
    gap: 6px;
    padding: 2px 0 3px 2px;
}

.swap-row .icon {
    width: 8px;
    height: 8px;
}

.swatches {
    position: relative;
    width: 23px;
    height: 22px;
    margin-left: 3px;
}

.swatches i {
    position: absolute;
    width: 14px;
    height: 14px;
    border: 1px solid #555;
}

.swatches .front {
    top: 0;
    left: 0;
    background: #ccc;
    border-color: #eee;
    outline: 1px solid #444;
}

.swatches .back {
    right: 1px;
    bottom: 0;
    background: #fff;
    border-color: #fff;
}

/* Document */
.center {
    flex: 1;
    min-width: 0;
    display: flex;
    flex-direction: column;
}

.doc-tabs {
    height: 16px;
    background: #212121;
}

.doc-tab {
    display: flex;
    align-items: center;
    gap: 5px;
    width: 127px;
    height: 15px;
    padding-left: 7px;
    background: #3a3a3a;
    color: #bbb;
    white-space: nowrap;
}

.stage {
    flex: 1;
    min-height: 0;
    display: flex;
    background: #1a1a1a;
}

.viewport {
    flex: 1;
    display: grid;
    place-items: center;
}

.artboard {
    width: 244px;
    height: 244px;
    background: #fff;
}

.scroll-y {
    width: 12px;
    background: linear-gradient(90deg, #1e1e1e, #2b2b2b);
}

.status {
    display: flex;
    align-items: center;
    height: 13px;
    margin-bottom: 1px;
    background: #1c1c1c;
}

.zoom-value {
    width: 36px;
    padding-left: 1px;
}

.status .icon {
    width: 16px;
    height: 11px;
    color: #aaa;
    background: #333;
}

.doc-info {
    width: 112px;
    height: 11px;
    padding-left: 25px;
    background: #303030;
    line-height: 11px;
    white-space: nowrap;
}

.status button {
    width: 23px;
    height: 11px;
    padding-left: 12px;
    background: #303030;
    font-size: 7px;
}

.scroll-x {
    flex: 1;
    height: 11px;
    background: linear-gradient(#1e1e1e, #2b2b2b);
}

.corner {
    width: 12px;
    height: 13px;
    background: #353535;
}

/* Tabs shared by all panels */
.tabs {
    display: flex;
    height: 13px;
    background: #212121;
}

.tab {
    padding: 0 5px;
    border-right: 1px solid #1a1a1a;
    color: #888;
    line-height: 13px;
    white-space: nowrap;
}

.tab.active {
    background: #353535;
    color: #ccc;
}

.panel-menu {
    width: 10px;
    height: 10px;
    margin: 1px 3px 0 auto;
    color: #999;
}

/* Timeline */
.timeline {
    background: #353535;
}

.controls {
    display: flex;
    height: 27px;
    border-bottom: 1px solid #2a2a2a;
    color: #888;
}

.controls .icon {
    width: 10px;
    height: 10px;
}

.transport, .edit, .track-end {
    display: flex;
    align-items: center;
    border-right: 1px solid #2a2a2a;
}

.transport {
    gap: 13px;
    width: 139px;
    padding-left: 5px;
}

.edit {
    gap: 12px;
    width: 52px;
    padding-left: 6px;
}

.edit .icon {
    width: 12px;
    height: 12px;
}

.track-end {
    flex: 1;
    margin-right: 31px;
}

.create {
    display: flex;
    justify-content: center;
    align-items: center;
    gap: 2px;
    height: 48px;
}

.create button {
    height: 15px;
    border: 1px solid #242424;
    border-radius: 2px;
    background: linear-gradient(#505050, #414141);
}

.create-main {
    width: 84px;
}

.create-more {
    width: 14px;
}

.timeline-foot {
    display: flex;
    height: 15px;
    border-top: 1px solid #292929;
    background: #232323;
    color: #777;
}

.foot-left, .foot-zoom {
    display: flex;
    align-items: center;
    background: #353535;
}

.foot-left {
    gap: 8px;
    width: 190px;
    padding-left: 4px;
    border-right: 1px solid #292929;
}

.foot-zoom {
    gap: 9px;
    width: 116px;
    padding-left: 4px;
}

.foot-zoom input {
    width: 65px;
    height: 3px;
    background: #1e1e1e;
}

.foot-zoom input::-webkit-slider-thumb {
    appearance: none;
    width: 0;
}

/* Icon dock */
.dock {
    width: 27px;
    margin-left: 1px;
    background: #353535;
}

.dock .collapse {
    text-align: right;
}

.dock-group {
    padding-bottom: 2px;
    border-top: 1px solid #454545;
    border-bottom: 1px solid #1c1c1c;
}

.dock-group .grip {
    margin: 2px auto 1px;
}

.dock-group button {
    width: 100%;
    height: 20px;
}

.dock-group .icon {
    width: 13px;
    height: 13px;
}

/* Right panels */
.panels {
    width: 176px;
    display: flex;
    flex-direction: column;
}

.panels .collapse {
    padding-right: 2px;
    text-align: right;
}

.panel {
    background: #353535;
}

.color-panel {
    height: 93px;
    margin-bottom: 3px;
}

.color-body {
    display: flex;
    padding: 7px 0 0 4px;
}

.color-body .swatches {
    margin: 1px 0 0;
}

.channels {
    padding-left: 4px;
}

.channel {
    display: flex;
    height: 18px;
}

.channel label {
    width: 9px;
}

.channel [type="range"] {
    width: 88px;
    height: 12px;
    margin: 2px 1px 0 0;
    background: linear-gradient(90deg, #00cccc, #ffcccc) 3px 0 / 82px 5px no-repeat;
}

.channel .green {
    background-image: linear-gradient(90deg, #cc00cc, #ccffcc);
}

.channel .blue {
    background-image: linear-gradient(90deg, #cccc00, #ccccff);
}

.channel [type="range"]::-webkit-slider-thumb {
    appearance: none;
    width: 8px;
    height: 6px;
    margin-top: 6px;
    background: #999;
    clip-path: polygon(50% 0, 100% 70%, 100% 100%, 0 100%, 0 70%);
}

.num {
    width: 28px;
    height: 14px;
    margin-top: 1px;
    padding-left: 2px;
    border: 1px solid #2a2a2a;
    background: #262626;
}

.spectrum {
    width: 160px;
    height: 11px;
    margin: 4px 0 0 3px;
    background:
        linear-gradient(rgba(255, 255, 255, .9), rgba(255, 255, 255, 0) 45%, rgba(0, 0, 0, 0) 55%, rgba(0, 0, 0, .7)),
        linear-gradient(90deg, #f00, #ff0 17%, #0a3 32%, #09f 50%, #219 66%, #e08 83%, #f00);
}

.spectrum i {
    display: block;
    width: 6px;
    height: 11px;
    margin-left: auto;
    background: linear-gradient(#fff 50%, #000 50%);
}

.adjust-panel {
    height: 94px;
    margin-bottom: 3px;
}

.adjust-panel p {
    margin: 4px 0 5px 6px;
}

.adjust-row {
    display: flex;
    justify-content: center;
    gap: 5px;
    height: 20px;
    padding-right: 24px;
}

.adjust-row .icon {
    width: 13px;
    height: 13px;
}

.layers-panel {
    flex: 1;
    min-height: 0;
    display: flex;
    flex-direction: column;
    color: #999;
}

.layer-row {
    display: flex;
    align-items: center;
    flex: none;
    height: 20px;
    padding-left: 4px;
    border-bottom: 1px solid #2b2b2b;
    white-space: nowrap;
}

.layer-row:nth-child(n + 3) {
    height: 21px;
}

.layers-panel .drop, .layers-panel .percent::before {
    background: #3b3b3b;
}

.layers-panel .drop, .layers-panel .combo {
    border-color: #2b2b2b;
}

.layers-panel .drop::after, .layers-panel .combo::after {
    background: #888;
}

.layers-panel .drop.kind {
    display: flex;
    align-items: center;
    width: 51px;
    padding-left: 5px;
}

.kind .icon {
    width: 9px;
    height: 9px;
}

.kind select {
    width: 35px;
    padding-left: 3px;
}

.filters, .locks {
    display: flex;
    gap: 7px;
    margin-left: 15px;
}

.filters .icon {
    width: 11px;
    height: 11px;
}

.toggle {
    width: 5px;
    height: 11px;
    margin: 0 5px 0 auto;
    border: 1px solid #222;
    background: linear-gradient(#555 50%, #2a2a2a 50%);
}

.blend {
    width: 81px;
    margin-right: 5px;
}

.percent {
    width: 41px;
    margin: 0 4px 0 auto;
}

.percent select {
    padding-left: 1px;
}

.percent::before {
    width: 13px;
}

.locks {
    margin-left: 7px;
    gap: 6px;
}

.locks .icon {
    width: 10px;
    height: 10px;
}

.fill-label {
    margin-left: auto;
}

.fill-label + .percent {
    margin-left: 4px;
}

.layer-list {
    flex: 1;
    min-height: 0;
    border-right: 12px solid #232323;
    background: #2b2b2b;
}

.layer {
    display: flex;
    height: 29px;
    margin-top: 1px;
    color: #ddd;
}

.visible {
    display: grid;
    place-items: center;
    width: 23px;
    background: #353535;
}

.visible .icon {
    width: 10px;
    height: 10px;
}

.layer-main {
    flex: 1;
    display: flex;
    align-items: center;
    gap: 9px;
    padding: 0 12px 0 2px;
    background: #4a5367;
}

.layer-main .icon {
    width: 9px;
    height: 10px;
    margin-left: auto;
}

.thumb {
    width: 24px;
    height: 24px;
    border: 1px solid #111;
    background: #fff;
}

.layer-foot {
    display: flex;
    justify-content: space-between;
    align-items: center;
    height: 15px;
    padding: 0 21px 0 26px;
    border-top: 1px solid #454545;
    color: #ccc;
}

.layer-foot .icon {
    width: 10px;
    height: 10px;
}

.layer-foot .dim {
    color: #888;
}

.fx {
    color: #888;
    font: italic 11px/12px "Liberation Serif", serif;
}

/* Task bar */
.taskbar {
    display: flex;
    height: 6px;
    overflow: hidden;
    border-top: 1px solid #555;
    background: #0c1119;
}

.orb {
    width: 24px;
    height: 24px;
    margin: 0 12px 0 8px;
    border-radius: 50%;
    background: #8aa3b8;
}

.tasks {
    display: flex;
    gap: 3px;
}

.task {
    width: 42px;
    height: 30px;
    border: 1px solid #ccc;
    border-radius: 2px;
    background: linear-gradient(100deg, #aaa, #555);
}

.task i {
    display: block;
    width: 20px;
    height: 20px;
    margin: 2px auto;
    background: #1a3038;
    border-top: 1px solid #2bf;
}

.task.orange i {
    border: 0;
    border-radius: 50%;
    background: #f58220;
}

.task.leaf i {
    border: 0;
    border-radius: 50%;
    background: linear-gradient(90deg, #eee 50%, #5a3 50%);
}

.task.blue i {
    border: 0;
    border-radius: 50%;
    background: #1296db;
}

.clock {
    margin: 2px 20px 0 auto;
    color: #fff;
}

.peek {
    width: 9px;
    height: 10px;
    margin-right: 1px;
    background: #777;
}

/* Input method bar */
.ime {
    position: absolute;
    top: 55px;
    right: 0;
    display: flex;
    align-items: center;
    gap: 4px;
    width: 127px;
    height: 17px;
    padding-right: 3px;
    background: linear-gradient(#fff, #e9eef8);
    color: #3548a0;
}

.ime .icon {
    width: 12px;
    height: 12px;
}

.ime .pale {
    color: #aebbd0;
}

.ime b {
    font-size: 11px;
}

.sogou {
    flex: none;
    width: 22px;
    height: 20px;
    margin-left: -9px;
}

/* Watermark */
.watermark {
    position: absolute;
    right: 54px;
    bottom: 22px;
    color: #ccc;
    opacity: .95;
}

.brand {
    display: flex;
    align-items: flex-end;
    height: 57px;
    padding-left: 2px;
}

.bai {
    font: bold 41px/38px "Liberation Sans", sans-serif;
}

.paw {
    position: relative;
    width: 52px;
    height: 57px;
}

.paw svg {
    width: 52px;
    height: 57px;
    fill: currentColor;
}

.du {
    position: absolute;
    inset: auto 0 5px;
    color: #333;
    text-align: center;
    font: bold 23px/20px "Liberation Sans", sans-serif;
}

.jingyan {
    font: bold 30px/32px "Noto Sans CJK SC", sans-serif;
}

.url {
    font: 21px/26px "Noto Sans", sans-serif;
}
```
